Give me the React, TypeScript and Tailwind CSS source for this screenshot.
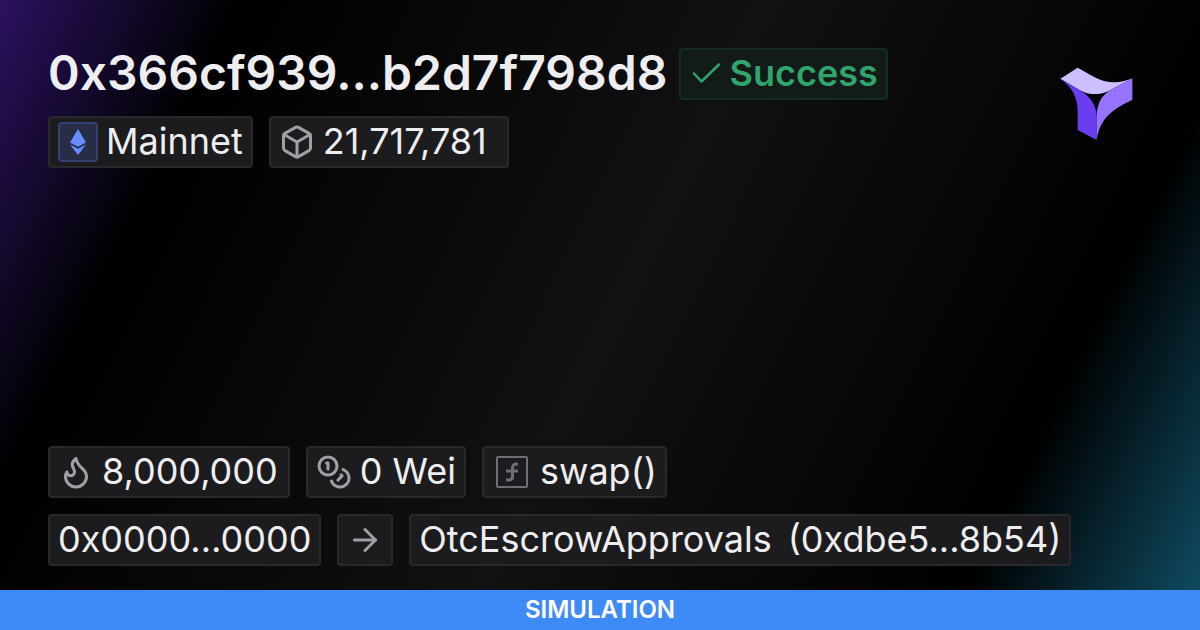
import type { ReactNode } from 'react';
import { ArrowRight, Box, Coins, Flame } from 'lucide-react';

const Tag = ({ icon, children }: { icon?: ReactNode; children?: ReactNode }) => (
  <div className="flex h-[52px] items-center gap-2 whitespace-nowrap rounded border-2 border-[#29292d] bg-[#1c1c1e] px-2 text-[36px] leading-[46px] text-[#eeeef0]">
    {icon}
    {children && <span className="flex gap-4 pb-0.5">{children}</span>}
  </div>
);

const EthereumIcon = () => (
  <span className="flex size-10 items-center justify-center rounded border-2 border-[#334273] bg-[#262d45]">
    <svg viewBox="0 0 16 26" className="h-[26px] w-4" fill="#6b8cff">
      <path d="M8 0 0 13.4l8 4.3 8-4.3z" />
      <path d="M0 15.6 8 26l8-10.4-8 4.2z" />
    </svg>
  </span>
);

const FunctionIcon = () => (
  <svg
    viewBox="0 0 40 40"
    className="size-10 text-[#6f6d78]"
    fill="none"
    stroke="currentColor"
  >
    <rect x="5" y="5" width="30" height="30" rx="1" strokeWidth="2" />
    <path
      d="M26 12h-1.500c-3 0-4 1.500-4 4v8.500c0 2.500-1 3.500-3.500 3.500H14M14 19h12"
      strokeWidth="3"
    />
  </svg>
);

const CheckIcon = () => (
  <svg
    viewBox="0 0 36 36"
    className="size-9"
    fill="none"
    stroke="currentColor"
    strokeWidth="2.5"
    strokeLinecap="round"
    strokeLinejoin="round"
  >
    <path d="M5 17.500 12.500 25.500 30 8.500" />
  </svg>
);

const Logo = () => (
  <svg viewBox="0 0 336 336" className="size-28 shrink-0">
    <path
      d="M61 92 113 59C150 78 180 103 222 103 245 103 262 97 277 91L206 129C180 142 145 143 112 122z"
      fill="#cdbfff"
    />
    <path
      d="M61 92 112 122C150 143 170 168 170 210V276L113 246V186C113 148 95 115 61 92z"
      fill="#6a3df0"
    />
    <path
      d="M277 91V155C235 177 180 200 170 276V202C172 165 185 142 212 126z"
      fill="#9674ff"
    />
  </svg>
);

const App = () => {
  return (
    <div className="flex min-h-screen flex-col bg-[linear-gradient(116deg,#2b1260_0%,#000000_16%,#111113_51%,#000000_83%,#105068_100%)] font-['Inter',sans-serif]">
      <main className="flex flex-1 flex-col justify-between px-12 pt-12 pb-6">
        <div className="flex items-start justify-between">
          <div className="flex flex-col gap-4">
            <div className="flex items-center gap-3">
              <h1 className="pb-0.5 text-[48px] leading-[50px] font-semibold text-[#eeeef0]">
                0x366cf939...b2d7f798d8
              </h1>
              <div className="flex h-[52px] items-center gap-1 rounded border-2 border-[#132d21] bg-[#121b17] px-2 text-[36px] leading-[46px] font-semibold text-[#30a46c]">
                <CheckIcon />
                <span className="pb-0.5">Success</span>
              </div>
            </div>
            <div className="flex gap-4">
              <Tag icon={<EthereumIcon />}>Mainnet</Tag>
              <Tag icon={<Box size={36} className="text-[#a09fa6]" />}>
                <span className="pr-3">21,717,781</span>
              </Tag>
            </div>
          </div>
          <Logo />
        </div>
        <div className="flex flex-col gap-4">
          <div className="flex gap-4">
            <Tag icon={<Flame size={36} className="text-[#a09fa6]" />}>
              <span className="pr-0.5">8,000,000</span>
            </Tag>
            <Tag icon={<Coins size={36} className="text-[#a09fa6]" />}>
              0 Wei
            </Tag>
            <Tag icon={<FunctionIcon />}>swap()</Tag>
          </div>
          <div className="flex gap-4">
            <Tag>0x0000...0000</Tag>
            <Tag icon={<ArrowRight size={36} className="text-[#a09fa6]" />} />
            <Tag>
              <span>OtcEscrowApprovals</span>
              <span>(0xdbe5...8b54)</span>
            </Tag>
          </div>
        </div>
      </main>
      <footer className="bg-[#3e8bf8] text-center text-[24px] leading-10 font-semibold text-white">
        SIMULATION
      </footer>
    </div>
  );
};

export default App;
